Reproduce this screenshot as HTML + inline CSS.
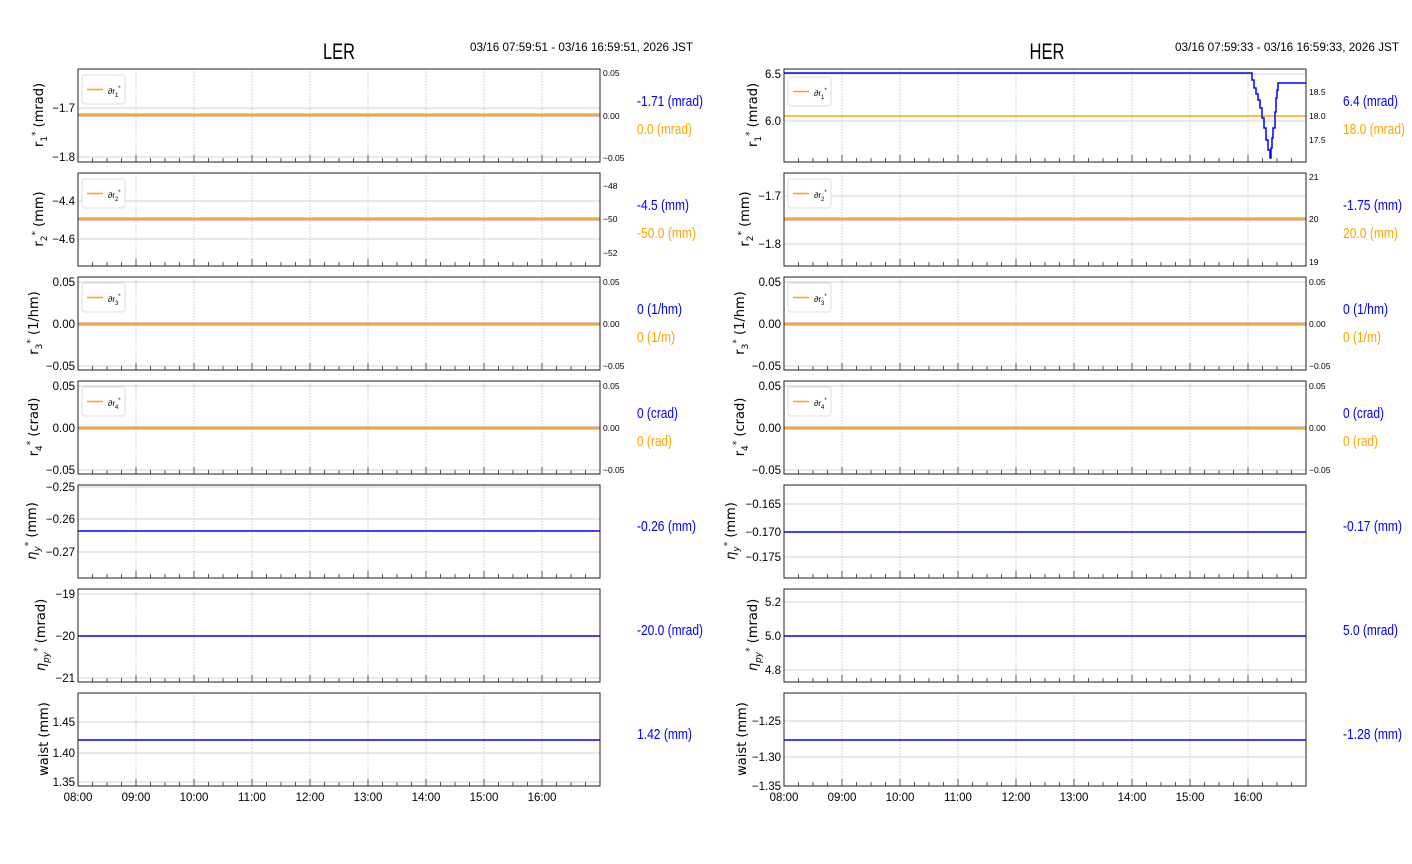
<!DOCTYPE html>
<html><head><meta charset="utf-8"><style>
html,body{margin:0;padding:0;background:#fff;}
svg{display:block;}
.t{font-family:"Liberation Sans",sans-serif;font-size:11.5px;fill:#000;}
.s{font-family:"Liberation Sans",sans-serif;font-size:8.5px;fill:#000;}
.v{font-family:"Liberation Sans",sans-serif;font-size:15px;}
.yl{font-family:"DejaVu Sans","Liberation Sans",sans-serif;font-size:13px;fill:#000;}
.h{stroke:#d0d0d0;stroke-width:1;}
</style></head><body>
<svg width="1412" height="864" viewBox="0 0 1412 864" xmlns="http://www.w3.org/2000/svg">
<defs>
<g id="g">
<path d="M58 0V93M116 0V93M174 0V93M232 0V93M290 0V93M348 0V93M406 0V93M464 0V93" stroke="#c8c8c8" stroke-dasharray="1.5,1.5" fill="none"/>
<path d="M58 93v-7M116 93v-7M174 93v-7M232 93v-7M290 93v-7M348 93v-7M406 93v-7M464 93v-7M14.5 93v-4M29 93v-4M43.5 93v-4M72.5 93v-4M87 93v-4M101.5 93v-4M130.5 93v-4M145 93v-4M159.5 93v-4M188.5 93v-4M203 93v-4M217.5 93v-4M246.5 93v-4M261 93v-4M275.5 93v-4M304.5 93v-4M319 93v-4M333.5 93v-4M362.5 93v-4M377 93v-4M391.5 93v-4M420.5 93v-4M435 93v-4M449.5 93v-4M478.5 93v-4M493 93v-4M507.5 93v-4" stroke="#555" fill="none"/>
</g>
<g id="leg"><rect x="0" y="0" width="43" height="29" rx="3" fill="#fff" stroke="#ddd"/><path d="M5 14.5h16" stroke="#ffa500" stroke-width="1.5"/></g>
</defs>

<text x="339" y="59" text-anchor="middle" font-family="Liberation Sans,sans-serif" font-size="22" textLength="32" lengthAdjust="spacingAndGlyphs">LER</text>
<text x="470" y="51" class="t" font-size="14" textLength="223" lengthAdjust="spacingAndGlyphs">03/16 07:59:51 - 03/16 16:59:51, 2026 JST</text>
<text x="1047" y="59" text-anchor="middle" font-family="Liberation Sans,sans-serif" font-size="22" textLength="35" lengthAdjust="spacingAndGlyphs">HER</text>
<text x="1175" y="51" class="t" font-size="14" textLength="224" lengthAdjust="spacingAndGlyphs">03/16 07:59:33 - 03/16 16:59:33, 2026 JST</text>

<!-- ===== LER ===== -->
<g>
<path class="h" d="M78 108H600M78 157H600M78 201H600M78 239H600M78 282H600M78 324H600M78 366H600M78 386H600M78 428H600M78 470H600M78 487H600M78 519H600M78 552H600M78 594H600M78 636H600M78 678H600M78 722H600M78 753H600M78 782H600"/>
<use href="#g" x="78" y="69"/><use href="#g" x="78" y="173"/><use href="#g" x="78" y="277"/><use href="#g" x="78" y="381"/><use href="#g" x="78" y="485"/><use href="#g" x="78" y="589"/><use href="#g" x="78" y="693"/>
<path d="M78 115H600M78 219H600M78 324H600M78 428H600" stroke="#d8b0b0" stroke-width="3.5"/>
<path d="M78 115H600M78 219H600M78 324H600M78 428H600" stroke="#ffa500" stroke-width="1.5"/>
<path d="M78 531H600M78 636H600M78 740H600" stroke="#0000ff" stroke-width="1.5"/>
<g fill="none" stroke="#222"><rect x="78" y="69" width="522" height="93"/><rect x="78" y="173" width="522" height="93"/><rect x="78" y="277" width="522" height="93"/><rect x="78" y="381" width="522" height="93"/><rect x="78" y="485" width="522" height="93"/><rect x="78" y="589" width="522" height="93"/><rect x="78" y="693" width="522" height="93"/></g>
<use href="#leg" x="82" y="75"/><text x="108" y="94" class="s">∂r<tspan font-size="6" dy="3">1</tspan><tspan font-size="6" dy="-7">*</tspan></text>
<use href="#leg" x="82" y="179"/><text x="108" y="198" class="s">∂r<tspan font-size="6" dy="3">2</tspan><tspan font-size="6" dy="-7">*</tspan></text>
<use href="#leg" x="82" y="283"/><text x="108" y="302" class="s">∂r<tspan font-size="6" dy="3">3</tspan><tspan font-size="6" dy="-7">*</tspan></text>
<use href="#leg" x="82" y="387"/><text x="108" y="406" class="s">∂r<tspan font-size="6" dy="3">4</tspan><tspan font-size="6" dy="-7">*</tspan></text>
<g class="t" text-anchor="end">
<text x="75" y="112">−1.7</text><text x="75" y="161">−1.8</text>
<text x="75" y="205">−4.4</text><text x="75" y="243">−4.6</text>
<text x="75" y="286">0.05</text><text x="75" y="328">0.00</text><text x="75" y="370">−0.05</text>
<text x="75" y="390">0.05</text><text x="75" y="432">0.00</text><text x="75" y="474">−0.05</text>
<text x="75" y="491">−0.25</text><text x="75" y="523">−0.26</text><text x="75" y="556">−0.27</text>
<text x="75" y="598">−19</text><text x="75" y="640">−20</text><text x="75" y="682">−21</text>
<text x="75" y="726">1.45</text><text x="75" y="757">1.40</text><text x="75" y="786">1.35</text>
</g>
<g class="s">
<text x="603" y="76">0.05</text><text x="603" y="119">0.00</text><text x="603" y="161">−0.05</text>
<text x="603" y="189">−48</text><text x="603" y="222">−50</text><text x="603" y="256">−52</text>
<text x="603" y="285">0.05</text><text x="603" y="327">0.00</text><text x="603" y="369">−0.05</text>
<text x="603" y="389">0.05</text><text x="603" y="431">0.00</text><text x="603" y="473">−0.05</text>
</g>
<g class="t" text-anchor="middle">
<text x="78" y="801">08:00</text><text x="136" y="801">09:00</text><text x="194" y="801">10:00</text><text x="252" y="801">11:00</text><text x="310" y="801">12:00</text><text x="368" y="801">13:00</text><text x="426" y="801">14:00</text><text x="484" y="801">15:00</text><text x="542" y="801">16:00</text>
</g>
<g class="yl" text-anchor="middle">
<text transform="translate(43,115) rotate(-90)">r<tspan font-size="9" dy="4">1</tspan><tspan font-size="9" dy="-9">*</tspan><tspan dy="5"> (mrad)</tspan></text>
<text transform="translate(43,219) rotate(-90)">r<tspan font-size="9" dy="4">2</tspan><tspan font-size="9" dy="-9">*</tspan><tspan dy="5"> (mm)</tspan></text>
<text transform="translate(38,323) rotate(-90)">r<tspan font-size="9" dy="4">3</tspan><tspan font-size="9" dy="-9">*</tspan><tspan dy="5"> (1/hm)</tspan></text>
<text transform="translate(38,427) rotate(-90)">r<tspan font-size="9" dy="4">4</tspan><tspan font-size="9" dy="-9">*</tspan><tspan dy="5"> (crad)</tspan></text>
<text transform="translate(36,531) rotate(-90)"><tspan font-style="italic">η</tspan><tspan font-size="9" dy="4" font-style="italic">y</tspan><tspan font-size="9" dy="-9">*</tspan><tspan dy="5"> (mm)</tspan></text>
<text transform="translate(45,635) rotate(-90)"><tspan font-style="italic">η</tspan><tspan font-size="9" dy="4" font-style="italic">py</tspan><tspan font-size="9" dy="-9">*</tspan><tspan dy="5"> (mrad)</tspan></text>
<text transform="translate(48,739) rotate(-90)">waist (mm)</text>
</g>
<g class="v" lengthAdjust="spacingAndGlyphs">
<text x="637" y="106" fill="#0000ff" textLength="66" lengthAdjust="spacingAndGlyphs">-1.71 (mrad)</text><text x="637" y="134" fill="#ffa500" textLength="55" lengthAdjust="spacingAndGlyphs">0.0 (mrad)</text>
<text x="637" y="210" fill="#0000ff" textLength="52" lengthAdjust="spacingAndGlyphs">-4.5 (mm)</text><text x="637" y="238" fill="#ffa500" textLength="59" lengthAdjust="spacingAndGlyphs">-50.0 (mm)</text>
<text x="637" y="314" fill="#0000ff" textLength="45" lengthAdjust="spacingAndGlyphs">0 (1/hm)</text><text x="637" y="342" fill="#ffa500" textLength="38" lengthAdjust="spacingAndGlyphs">0 (1/m)</text>
<text x="637" y="418" fill="#0000ff" textLength="41" lengthAdjust="spacingAndGlyphs">0 (crad)</text><text x="637" y="446" fill="#ffa500" textLength="35" lengthAdjust="spacingAndGlyphs">0 (rad)</text>
<text x="637" y="531" fill="#0000ff" textLength="59" lengthAdjust="spacingAndGlyphs">-0.26 (mm)</text>
<text x="637" y="635" fill="#0000ff" textLength="66" lengthAdjust="spacingAndGlyphs">-20.0 (mrad)</text>
<text x="637" y="739" fill="#0000ff" textLength="55" lengthAdjust="spacingAndGlyphs">1.42 (mm)</text>
</g>
</g>

<!-- ===== HER ===== -->
<g>
<path class="h" d="M784 74H1306M784 121H1306M784 196H1306M784 244H1306M784 282H1306M784 324H1306M784 366H1306M784 386H1306M784 428H1306M784 470H1306M784 504H1306M784 532H1306M784 557H1306M784 602H1306M784 636H1306M784 670H1306M784 721H1306M784 757H1306"/>
<use href="#g" x="784" y="69"/><use href="#g" x="784" y="173"/><use href="#g" x="784" y="277"/><use href="#g" x="784" y="381"/><use href="#g" x="784" y="485"/><use href="#g" x="784" y="589"/><use href="#g" x="784" y="693"/>
<path d="M784 116H1306" stroke="#ffa500" stroke-width="1.5"/>
<path d="M784 73H1252V80H1254V88H1256V94H1258V100H1260V108H1262V118H1264V128H1266V140H1268V150H1270V158H1271V148H1272V138H1273V128H1275V112H1276V98H1277V90H1278V83H1306" stroke="#0000ff" stroke-width="1.5" fill="none"/>
<path d="M784 219H1306M784 324H1306M784 428H1306" stroke="#d8b0b0" stroke-width="3.5"/>
<path d="M784 219H1306M784 324H1306M784 428H1306" stroke="#ffa500" stroke-width="1.5"/>
<path d="M784 532H1306M784 636H1306M784 740H1306" stroke="#0000ff" stroke-width="1.5"/>
<g fill="none" stroke="#222"><rect x="784" y="69" width="522" height="93"/><rect x="784" y="173" width="522" height="93"/><rect x="784" y="277" width="522" height="93"/><rect x="784" y="381" width="522" height="93"/><rect x="784" y="485" width="522" height="93"/><rect x="784" y="589" width="522" height="93"/><rect x="784" y="693" width="522" height="93"/></g>
<use href="#leg" x="788" y="77"/><text x="814" y="96" class="s">∂r<tspan font-size="6" dy="3">1</tspan><tspan font-size="6" dy="-7">*</tspan></text>
<use href="#leg" x="788" y="179"/><text x="814" y="198" class="s">∂r<tspan font-size="6" dy="3">2</tspan><tspan font-size="6" dy="-7">*</tspan></text>
<use href="#leg" x="788" y="283"/><text x="814" y="302" class="s">∂r<tspan font-size="6" dy="3">3</tspan><tspan font-size="6" dy="-7">*</tspan></text>
<use href="#leg" x="788" y="387"/><text x="814" y="406" class="s">∂r<tspan font-size="6" dy="3">4</tspan><tspan font-size="6" dy="-7">*</tspan></text>
<g class="t" text-anchor="end">
<text x="781" y="78">6.5</text><text x="781" y="125">6.0</text>
<text x="781" y="200">−1.7</text><text x="781" y="248">−1.8</text>
<text x="781" y="286">0.05</text><text x="781" y="328">0.00</text><text x="781" y="370">−0.05</text>
<text x="781" y="390">0.05</text><text x="781" y="432">0.00</text><text x="781" y="474">−0.05</text>
<text x="781" y="508">−0.165</text><text x="781" y="536">−0.170</text><text x="781" y="561">−0.175</text>
<text x="781" y="606">5.2</text><text x="781" y="640">5.0</text><text x="781" y="674">4.8</text>
<text x="781" y="725">−1.25</text><text x="781" y="761">−1.30</text><text x="781" y="790">−1.35</text>
</g>
<g class="s">
<text x="1309" y="95">18.5</text><text x="1309" y="119">18.0</text><text x="1309" y="143">17.5</text>
<text x="1309" y="180">21</text><text x="1309" y="222">20</text><text x="1309" y="265">19</text>
<text x="1309" y="285">0.05</text><text x="1309" y="327">0.00</text><text x="1309" y="369">−0.05</text>
<text x="1309" y="389">0.05</text><text x="1309" y="431">0.00</text><text x="1309" y="473">−0.05</text>
</g>
<g class="t" text-anchor="middle">
<text x="784" y="801">08:00</text><text x="842" y="801">09:00</text><text x="900" y="801">10:00</text><text x="958" y="801">11:00</text><text x="1016" y="801">12:00</text><text x="1074" y="801">13:00</text><text x="1132" y="801">14:00</text><text x="1190" y="801">15:00</text><text x="1248" y="801">16:00</text>
</g>
<g class="yl" text-anchor="middle">
<text transform="translate(757,115) rotate(-90)">r<tspan font-size="9" dy="4">1</tspan><tspan font-size="9" dy="-9">*</tspan><tspan dy="5"> (mrad)</tspan></text>
<text transform="translate(749,219) rotate(-90)">r<tspan font-size="9" dy="4">2</tspan><tspan font-size="9" dy="-9">*</tspan><tspan dy="5"> (mm)</tspan></text>
<text transform="translate(744,323) rotate(-90)">r<tspan font-size="9" dy="4">3</tspan><tspan font-size="9" dy="-9">*</tspan><tspan dy="5"> (1/hm)</tspan></text>
<text transform="translate(744,427) rotate(-90)">r<tspan font-size="9" dy="4">4</tspan><tspan font-size="9" dy="-9">*</tspan><tspan dy="5"> (crad)</tspan></text>
<text transform="translate(735,531) rotate(-90)"><tspan font-style="italic">η</tspan><tspan font-size="9" dy="4" font-style="italic">y</tspan><tspan font-size="9" dy="-9">*</tspan><tspan dy="5"> (mm)</tspan></text>
<text transform="translate(757,635) rotate(-90)"><tspan font-style="italic">η</tspan><tspan font-size="9" dy="4" font-style="italic">py</tspan><tspan font-size="9" dy="-9">*</tspan><tspan dy="5"> (mrad)</tspan></text>
<text transform="translate(746,739) rotate(-90)">waist (mm)</text>
</g>
<g class="v">
<text x="1343" y="106" fill="#0000ff" textLength="55" lengthAdjust="spacingAndGlyphs">6.4 (mrad)</text><text x="1343" y="134" fill="#ffa500" textLength="62" lengthAdjust="spacingAndGlyphs">18.0 (mrad)</text>
<text x="1343" y="210" fill="#0000ff" textLength="59" lengthAdjust="spacingAndGlyphs">-1.75 (mm)</text><text x="1343" y="238" fill="#ffa500" textLength="55" lengthAdjust="spacingAndGlyphs">20.0 (mm)</text>
<text x="1343" y="314" fill="#0000ff" textLength="45" lengthAdjust="spacingAndGlyphs">0 (1/hm)</text><text x="1343" y="342" fill="#ffa500" textLength="38" lengthAdjust="spacingAndGlyphs">0 (1/m)</text>
<text x="1343" y="418" fill="#0000ff" textLength="41" lengthAdjust="spacingAndGlyphs">0 (crad)</text><text x="1343" y="446" fill="#ffa500" textLength="35" lengthAdjust="spacingAndGlyphs">0 (rad)</text>
<text x="1343" y="531" fill="#0000ff" textLength="59" lengthAdjust="spacingAndGlyphs">-0.17 (mm)</text>
<text x="1343" y="635" fill="#0000ff" textLength="55" lengthAdjust="spacingAndGlyphs">5.0 (mrad)</text>
<text x="1343" y="739" fill="#0000ff" textLength="59" lengthAdjust="spacingAndGlyphs">-1.28 (mm)</text>
</g>
</g>
</svg>
</body></html>
